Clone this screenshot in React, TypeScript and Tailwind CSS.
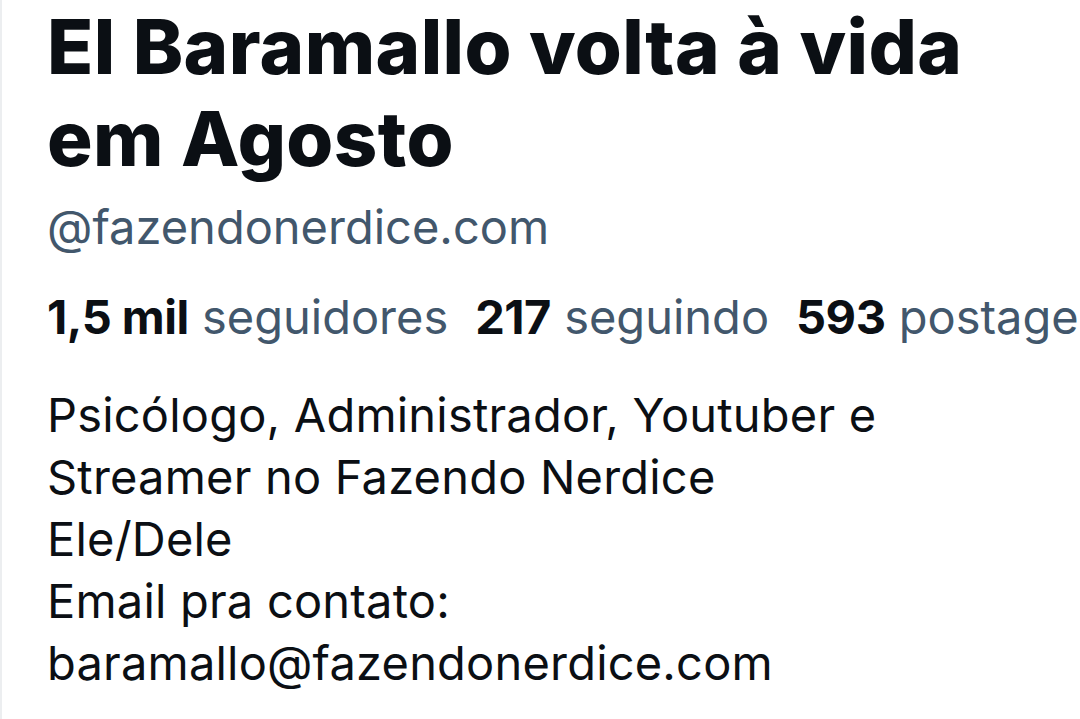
export default function App() {
  return (
    <div className="min-h-screen overflow-hidden bg-white border-l-2 border-[#eceef0] font-['Inter',sans-serif] text-[#0b0f14]">
      <div className="pl-[45px]">
        {/* Display name */}
        <h1 className="text-[76px] leading-[92px] font-extrabold tracking-[0.4px]">
          El Baramallo volta à vida
          <br />
          em Agosto
        </h1>

        {/* Handle */}
        <div className="mt-[14px] text-[47px] leading-[57px] text-[#42576c]">@fazendonerdice.com</div>

        {/* Stats */}
        <div className="mt-[33px] flex gap-[27px] whitespace-nowrap text-[47px] leading-[57px]">
          <span>
            <span className="font-bold tracking-[-0.5px]">1,5 mil</span> <span className="text-[#42576c]">seguidores</span>
          </span>
          <span>
            <span className="font-bold tracking-[-0.5px]">217</span> <span className="text-[#42576c]">seguindo</span>
          </span>
          <span>
            <span className="font-bold tracking-[-0.5px]">593</span> <span className="text-[#42576c]">postagens</span>
          </span>
        </div>

        {/* Bio */}
        <p className="mt-[39px] text-[47px] leading-[62px] tracking-[0.2px]">
          Psicólogo, Administrador, Youtuber e
          <br />
          Streamer no Fazendo Nerdice
          <br />
          Ele/Dele
          <br />
          Email pra contato:
          <br />
          baramallo@fazendonerdice.com
        </p>
      </div>
    </div>
  );
}
